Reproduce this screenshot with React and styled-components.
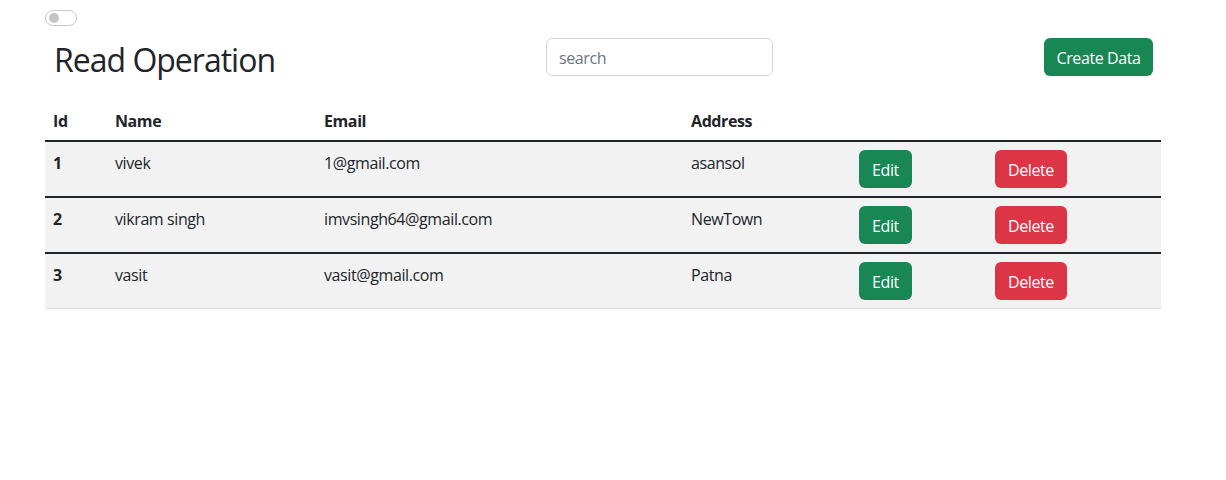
import React from 'react';
import styled, { createGlobalStyle } from 'styled-components';

const GlobalStyle = createGlobalStyle`
    body {
        margin: 0;
        background: #fff;
        color: #212529;
        font-family: 'Open Sans', 'Noto Sans', sans-serif;
        font-size: 16px;
        line-height: 1.5;
        letter-spacing: -0.4px;
    }
    * { box-sizing: border-box; }
`;

const Container = styled.div`
    width: 1116px;
    margin-left: 45px;
    padding-top: 10px;
`;

const Switch = styled.div`
    position: relative;
    width: 32px;
    height: 16px;
    border: 1px solid #c7c7c7;
    border-radius: 8px;
    background: #fff;

    &::after {
        content: '';
        position: absolute;
        top: 2px;
        left: 3px;
        width: 10px;
        height: 10px;
        border-radius: 50%;
        background: #c4c4c4;
    }
`;

const Header = styled.div`
    display: grid;
    grid-template-columns: 492px 227px 1fr;
    align-items: center;
    height: 38px;
    margin-top: 12px;
    padding: 0 8px 0 9px;
`;

const Title = styled.h2`
    margin: 0;
    padding-top: 6px;
    font-size: 32px;
    font-weight: 400;
    line-height: 32px;
    letter-spacing: -1px;
`;

const Search = styled.input`
    width: 227px;
    height: 38px;
    padding: 7px 12px 5px;
    font-family: inherit;
    font-size: 16px;
    letter-spacing: inherit;
    color: #212529;
    border: 1px solid #d3d7dc;
    border-radius: 6px;
    outline: none;

    &::placeholder {
        color: #6c757d;
    }
`;

const Button = styled.button`
    width: ${(p) => p.$w}px;
    height: 38px;
    padding: 2px 0 0;
    font-family: inherit;
    font-size: 16px;
    letter-spacing: inherit;
    color: #fff;
    border: none;
    border-radius: 6px;
    background: ${(p) => (p.$danger ? '#dc3545' : '#198754')};
    justify-self: ${(p) => (p.$end ? 'end' : 'start')};
    cursor: pointer;
`;

const Table = styled.table`
    width: 1116px;
    margin-top: 24px;
    border-collapse: collapse;
    table-layout: fixed;
`;

const Th = styled.th`
    padding: 9px 8px 7px;
    text-align: left;
    font-weight: 700;
    line-height: 24px;
`;

const Row = styled.tr`
    background: #f2f2f2;
    border-top: 2px solid #212529;

    &:last-child {
        border-bottom: 1px solid #dee2e6;
    }
`;

const Td = styled.td`
    padding: 8px;
    vertical-align: top;
    line-height: 26px;
    font-weight: ${(p) => (p.$bold ? 700 : 400)};
`;

const rows = [
    { id: 1, name: 'vivek', email: '1@gmail.com', address: 'asansol' },
    { id: 2, name: 'vikram singh', email: 'imvsingh64@gmail.com', address: 'NewTown' },
    { id: 3, name: 'vasit', email: 'vasit@gmail.com', address: 'Patna' },
];

function App() {
    return (
        <>
            <GlobalStyle />
            <Container>
                <Switch />
                <Header>
                    <Title>Read Operation</Title>
                    <Search placeholder="search" />
                    <Button $w={109} $end>Create Data</Button>
                </Header>
                <Table>
                    <colgroup>
                        <col style={{ width: 62 }} />
                        <col style={{ width: 209 }} />
                        <col style={{ width: 367 }} />
                        <col style={{ width: 168 }} />
                        <col style={{ width: 136 }} />
                        <col style={{ width: 174 }} />
                    </colgroup>
                    <thead>
                        <tr>
                            <Th>Id</Th>
                            <Th>Name</Th>
                            <Th>Email</Th>
                            <Th>Address</Th>
                            <Th />
                            <Th />
                        </tr>
                    </thead>
                    <tbody>
                        {rows.map((r) => (
                            <Row key={r.id}>
                                <Td $bold>{r.id}</Td>
                                <Td>{r.name}</Td>
                                <Td>{r.email}</Td>
                                <Td>{r.address}</Td>
                                <Td><Button $w={53}>Edit</Button></Td>
                                <Td><Button $w={72} $danger>Delete</Button></Td>
                            </Row>
                        ))}
                    </tbody>
                </Table>
            </Container>
        </>
    );
}

export default App;
